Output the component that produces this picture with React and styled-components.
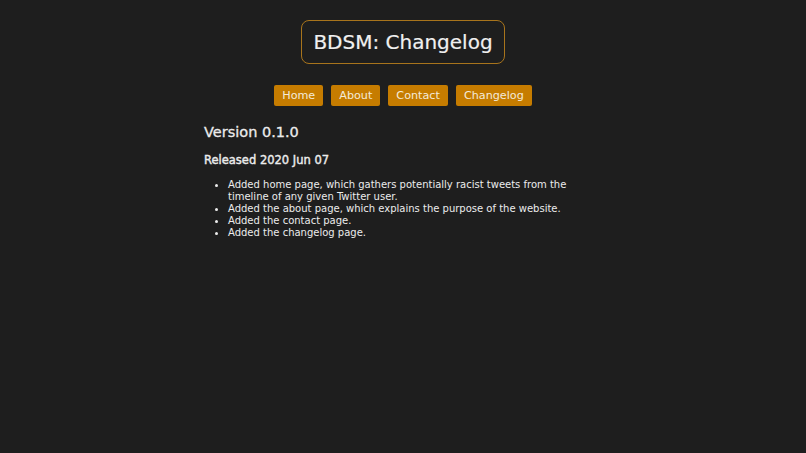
import styled, { createGlobalStyle } from "styled-components";

const GlobalStyle = createGlobalStyle`
  body {
    margin: 0;
    background: #1e1e1e;
    color: #ececec;
    font-family: "DejaVu Sans", "Noto Sans", sans-serif;
  }
`;

const changes = [
  "Added home page, which gathers potentially racist tweets from the timeline of any given Twitter user.",
  "Added the about page, which explains the purpose of the website.",
  "Added the contact page.",
  "Added the changelog page.",
];

const links = ["Home", "About", "Contact", "Changelog"];

export default function App() {
  return (
    <Page>
      <GlobalStyle />
      <Title>BDSM: Changelog</Title>
      <Nav>
        {links.map((l) => (
          <NavButton key={l}>{l}</NavButton>
        ))}
      </Nav>
      <Content>
        <Version>Version 0.1.0</Version>
        <Released>Released 2020 Jun 07</Released>
        <List>
          {changes.map((c) => (
            <Item key={c}>{c}</Item>
          ))}
        </List>
      </Content>
    </Page>
  );
}

const Page = styled.div`
  display: flex;
  flex-direction: column;
  align-items: center;
  padding-top: 20px;
`;

const Title = styled.h1`
  margin: 0;
  box-sizing: border-box;
  height: 44px;
  padding: 0 11px;
  display: flex;
  align-items: center;
  border: 1px solid #a8741c;
  border-radius: 8px;
  font-size: 20px;
  font-weight: 400;
  color: #f0f0f0;
  -webkit-text-stroke: 0.2px #f0f0f0;
`;

const Nav = styled.nav`
  display: flex;
  gap: 8px;
  margin-top: 21px;
`;

const NavButton = styled.button`
  border: none;
  height: 21px;
  padding: 0 8px;
  border-radius: 2px;
  background: #c67c00;
  color: #f4ead8;
  font-family: inherit;
  font-size: 11.2px;
`;

const Content = styled.div`
  width: 400px;
  margin-top: 16px;
`;

const Version = styled.h2`
  margin: 0 0 0 1px;
  font-size: 14.5px;
  font-weight: 400;
  line-height: 20px;
  -webkit-text-stroke: 0.3px #ececec;
`;

const Released = styled.h3`
  margin: 9px 0 0 1px;
  font-size: 11.5px;
  font-weight: 400;
  line-height: 18px;
  -webkit-text-stroke: 0.4px #ececec;
`;

const List = styled.ul`
  margin: 10px 0 0;
  padding-left: 25px;
  font-size: 10px;
  width: 350px;
`;

const Item = styled.li`
  line-height: 12px;
  height: auto;

  &::marker {
    font-size: 11px;
  }
`;
